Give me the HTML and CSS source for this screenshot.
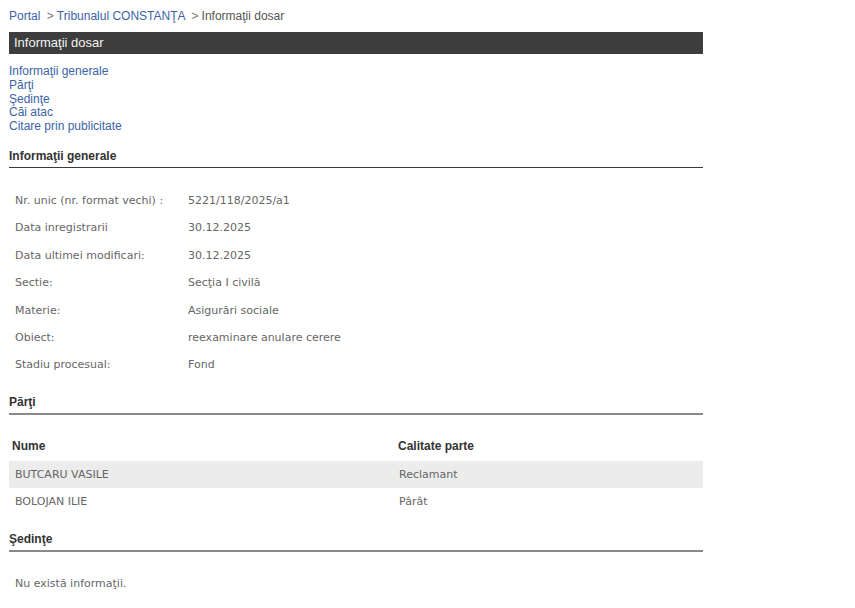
FILE: index.html
```html
<!DOCTYPE html>
<html lang="ro">
<head>
<meta charset="utf-8">
<title>Informaţii dosar</title>
<link rel="stylesheet" href="styles.css">
</head>
<body>
<div class="page">
  <div class="crumbs">
    <a href="#" class="crumb-link">Portal</a>
    <span class="sep">&gt;</span> <a href="#" class="crumb-link">Tribunalul CONSTANŢA</a>
    <span class="sep">&gt;</span> <span class="crumb-current">Informaţii dosar</span>
  </div>

  <div class="titlebar">Informaţii dosar</div>

  <nav class="toc">
    <a href="#" class="toc-link">Informaţii generale</a>
    <a href="#" class="toc-link">Părţi</a>
    <a href="#" class="toc-link">Şedinţe</a>
    <a href="#" class="toc-link">Căi atac</a>
    <a href="#" class="toc-link">Citare prin publicitate</a>
  </nav>

  <h2 class="section-title first">Informaţii generale</h2>
  <table class="info">
    <tr><td class="lbl">Nr. unic (nr. format vechi) :</td><td class="val">5221/118/2025/a1</td></tr>
    <tr><td class="lbl">Data inregistrarii</td><td class="val">30.12.2025</td></tr>
    <tr><td class="lbl">Data ultimei modificari:</td><td class="val">30.12.2025</td></tr>
    <tr><td class="lbl">Sectie:</td><td class="val">Secţia I civilă</td></tr>
    <tr><td class="lbl">Materie:</td><td class="val">Asigurări sociale</td></tr>
    <tr><td class="lbl">Obiect:</td><td class="val">reexaminare anulare cerere</td></tr>
    <tr><td class="lbl">Stadiu procesual:</td><td class="val">Fond</td></tr>
  </table>

  <h2 class="section-title">Părţi</h2>
  <table class="parti">
    <thead>
      <tr><th class="c1">Nume</th><th class="c2">Calitate parte</th></tr>
    </thead>
    <tbody>
      <tr class="odd"><td class="c1">BUTCARU VASILE</td><td class="c2">Reclamant</td></tr>
      <tr><td class="c1">BOLOJAN ILIE</td><td class="c2">Pârât</td></tr>
    </tbody>
  </table>

  <h2 class="section-title">Şedinţe</h2>
  <p class="empty">Nu există informaţii.</p>
</div>
</body>
</html>
```

FILE: styles.css
```css
html, body {
  margin: 0;
  padding: 0;
  background: #ffffff;
}

body {
  font-family: "Liberation Sans", Arial, sans-serif;
  font-size: 12px;
  color: #333;
}

.page {
  width: 694px;
  padding: 9px 0 0 9px;
}

.crumbs {
  line-height: 14px;
  color: #555;
}

.crumb-link {
  color: #3b64a8;
  text-decoration: none;
}

.sep {
  color: #777;
  margin-left: 3px;
}

.crumb-current {
  color: #555;
}

.titlebar {
  margin-top: 9px;
  height: 22px;
  line-height: 22px;
  background: #3d3d3d;
  color: #f2f2f2;
  font-size: 13px;
  padding-left: 5px;
}

.toc {
  display: flex;
  flex-direction: column;
  margin-top: 11px;
}

.toc-link {
  color: #3b64a8;
  text-decoration: none;
  line-height: 13.75px;
}

.section-title {
  margin: 0;
  font-size: 12px;
  font-weight: bold;
  color: #333;
  line-height: 14px;
  padding-bottom: 4px;
  border-bottom: 2px solid #8a8a8a;
}

.section-title.first {
  margin-top: 15px;
  border-bottom: 1px solid #3a3a3a;
}

.info {
  border-collapse: collapse;
  table-layout: fixed;
  margin-top: 19px;
  width: 100%;
  font-family: "DejaVu Sans", Tahoma, sans-serif;
  font-size: 11px;
  color: #666;
}

.info td {
  height: 27.4px;
  padding: 0 6px;
  vertical-align: middle;
  white-space: nowrap;
}

.info .lbl {
  width: 161px;
}

.info + .section-title,
.parti + .section-title {
  margin-top: 17px;
}

.parti {
  border-collapse: collapse;
  width: 100%;
  margin-top: 16px;
}

.parti th {
  text-align: left;
  font-weight: bold;
  color: #333;
  font-size: 12px;
  height: 30px;
  padding: 0 3px;
  vertical-align: middle;
}

.parti th.c1 {
  width: 380px;
}

.parti td {
  height: 27px;
  font-family: "DejaVu Sans", Tahoma, sans-serif;
  font-size: 11px;
  color: #666;
  vertical-align: middle;
}

.parti td.c1 {
  padding: 0 6px;
}

.parti td.c2 {
  padding: 0 4px;
}

.parti tr.odd td {
  background: #ececec;
}

.empty {
  margin: 25px 0 0 6px;
  font-family: "DejaVu Sans", Tahoma, sans-serif;
  font-size: 11px;
  color: #666;
  line-height: 13px;
}
```
